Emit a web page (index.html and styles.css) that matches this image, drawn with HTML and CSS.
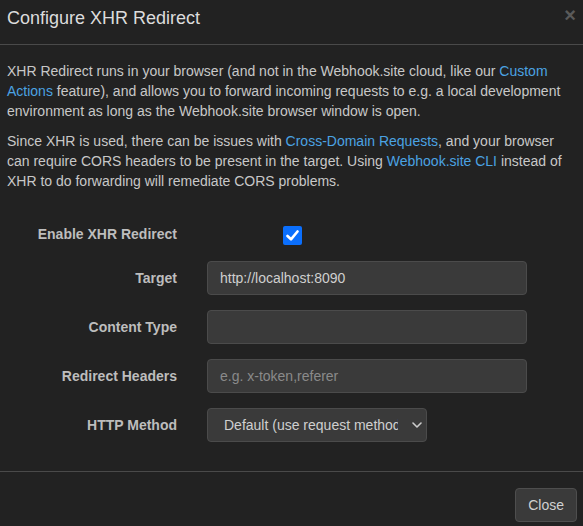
FILE: index.html
```html
<!DOCTYPE html>
<html>
<head>
<meta charset="utf-8">
<link rel="stylesheet" href="styles.css">
</head>
<body>
<div class="modal">
  <div class="modal-header">
    <h4 class="modal-title">Configure XHR Redirect</h4>
    <span class="close">&times;</span>
  </div>
  <div class="modal-body">
    <p>XHR Redirect runs in your browser (and not in the Webhook.site cloud, like our <a href="#">Custom Actions</a> feature), and allows you to forward incoming requests to e.g. a local development environment as long as the Webhook.site browser window is open.</p>
    <p>Since XHR is used, there can be issues with <a href="#">Cross-Domain Requests</a>, and your browser can require CORS headers to be present in the target. Using <a href="#">Webhook.site CLI</a> instead of XHR to do forwarding will remediate CORS problems.</p>
    <form class="form">
      <div class="row row-check">
        <label class="lbl">Enable XHR Redirect</label>
        <div class="ctl"><span class="checkbox"><svg width="13" height="11" viewBox="0 0 13 11"><path d="M1.5 6 L5 9.3 L11.5 1.5" fill="none" stroke="#fff" stroke-width="2.6" stroke-linecap="round" stroke-linejoin="round"/></svg></span></div>
      </div>
      <div class="row">
        <label class="lbl">Target</label>
        <div class="ctl"><div class="input">http://localhost:8090</div></div>
      </div>
      <div class="row">
        <label class="lbl">Content Type</label>
        <div class="ctl"><div class="input"></div></div>
      </div>
      <div class="row">
        <label class="lbl">Redirect Headers</label>
        <div class="ctl"><div class="input placeholder">e.g. x-token,referer</div></div>
      </div>
      <div class="row">
        <label class="lbl">HTTP Method</label>
        <div class="ctl"><div class="select"><span class="sel-text">Default (use request method)</span><svg class="chev" width="10" height="6" viewBox="0 0 10 6"><path d="M1 1 L5 5 L9 1" fill="none" stroke="#ccc" stroke-width="1.6" stroke-linecap="round" stroke-linejoin="round"/></svg></div></div>
      </div>
    </form>
  </div>
  <div class="modal-footer">
    <button class="btn" type="button">Close</button>
  </div>
</div>
</body>
</html>
```

FILE: styles.css
```css
html, body {
  margin: 0;
  padding: 0;
  background: #222222;
}
body {
  font-family: "Liberation Sans", Arial, Helvetica, sans-serif;
  font-size: 14px;
  line-height: 20px;
  color: #c8c8c8;
  width: 583px;
  height: 526px;
  overflow: hidden;
}
.modal {
  background: #222222;
}
.modal-header {
  display: flex;
  justify-content: space-between;
  align-items: flex-start;
  height: 44px;
  padding: 0 6px 0 7px;
  border-bottom: 1px solid #4a4a4a;
}
.modal-title {
  margin: 7px 0 0 0;
  font-size: 18px;
  line-height: 22px;
  font-weight: normal;
  color: #dcdcdc;
}
.close {
  font-size: 20px;
  font-weight: bold;
  line-height: 20px;
  color: #5a5a5a;
  margin-top: 5px;
  margin-right: 1px;
}
.modal-body {
  padding: 16px 6px 0 7px;
  height: 410px;
  border-bottom: 1px solid #4a4a4a;
}
.modal-body p {
  margin: 0 0 10px 0;
}
a {
  color: #4ba3e3;
  text-decoration: none;
}
.form {
  margin-top: 35px;
  display: flex;
  flex-direction: column;
  gap: 15px;
}
.row {
  display: grid;
  grid-template-columns: 170px 320px;
  column-gap: 30px;
  align-items: center;
}
.row-check {
  margin-bottom: 1px;
}
.lbl {
  text-align: right;
  font-weight: bold;
  color: #bdbdbd;
}
.row-check .lbl {
  align-self: start;
  margin-top: -2px;
}
.checkbox {
  display: flex;
  align-items: center;
  justify-content: center;
  width: 19px;
  height: 19px;
  margin-left: 76px;
  background: #0b6ffd;
  border-radius: 2px;
}
.input, .select {
  box-sizing: border-box;
  height: 34px;
  padding: 6px 12px;
  background: #3a3a3a;
  border: 1px solid #4b4b4b;
  border-radius: 4px;
  color: #cfcfcf;
  line-height: 20px;
}
.placeholder {
  color: #8a8a8a;
}
.select {
  width: 220px;
  display: flex;
  align-items: center;
  padding: 6px 4px 6px 16px;
}
.sel-text {
  flex: 1;
  white-space: nowrap;
  overflow: hidden;
  color: #cfcfcf;
}
.chev {
  margin-left: 14px;
  flex: none;
}
.modal-footer {
  display: flex;
  justify-content: flex-end;
  padding: 16px 6px 0 0;
}
.btn {
  font-family: "Liberation Sans", Arial, Helvetica, sans-serif;
  font-size: 14px;
  line-height: 20px;
  height: 34px;
  padding: 6px 12px;
  background: #3a3a3a;
  color: #d0d0d0;
  border: 1px solid #4e4e4e;
  border-radius: 4px;
}
```
